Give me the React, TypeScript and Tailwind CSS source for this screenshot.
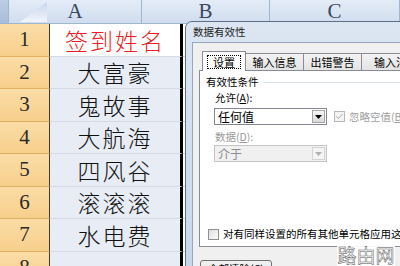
import { Check } from 'lucide-react';

const rows = [
  { n: 1, v: '签到姓名', red: true },
  { n: 2, v: '大富豪' },
  { n: 3, v: '鬼故事' },
  { n: 4, v: '大航海' },
  { n: 5, v: '四风谷' },
  { n: 6, v: '滚滚滚' },
  { n: 7, v: '水电费' },
  { n: 8, v: '' },
];

const cjk = "font-['Noto_Sans_CJK_SC',sans-serif]";
const serif = "font-['Liberation_Serif',serif]";

function Box({ checked, disabled }: { checked?: boolean; disabled?: boolean }) {
  return (
    <div
      className={`flex h-[11px] w-[11px] shrink-0 items-center justify-center border ${
        disabled ? 'border-[#b8b8b8] bg-[#f4f4f4]' : 'border-[#8e8f8f] bg-gradient-to-br from-[#dcdcdc] to-white'
      }`}
    >
      {checked && <Check className="h-[9px] w-[9px] text-[#a8a8a8]" strokeWidth={2.5} />}
    </div>
  );
}

function Combo({ value, disabled }: { value: string; disabled?: boolean }) {
  return (
    <div
      className={`ml-[13px] flex h-[17px] w-[113px] items-center border ${
        disabled ? 'border-[#c4c6c8] bg-[#f0f0f0] text-[#8d8d8d]' : 'border-[#828790] bg-white text-black'
      }`}
    >
      <span className="flex-1 pl-[3px] text-[12px] leading-none">{value}</span>
      <div
        className={`mr-px flex h-[13px] w-[13px] items-center justify-center border ${
          disabled ? 'border-[#d4d4d4] bg-[#f4f4f4]' : 'border-[#a5a5a5] bg-gradient-to-b from-[#f6f6f6] to-[#dadada]'
        }`}
      >
        <svg width="7" height="4" viewBox="0 0 7 4">
          <path d="M0 0H7L3.5 4Z" fill={disabled ? '#b0b0b0' : '#000'} />
        </svg>
      </div>
    </div>
  );
}

function Sheet() {
  return (
    <div className="flex flex-col">
      <div className="flex h-[24px]">
        <div className="relative w-[50px] border-r border-b border-[#9eb6ce] bg-gradient-to-b from-[#bccde5] to-[#a9bedb]">
          <svg className="absolute inset-0" width="49" height="23" viewBox="0 0 49 23">
            <defs>
              <linearGradient id="tri" x1="0" y1="0" x2="0" y2="1">
                <stop offset="0" stopColor="#c7d5ea" />
                <stop offset="1" stopColor="#f1f5fb" />
              </linearGradient>
            </defs>
            <path d="M20 22H47V2Z" fill="url(#tri)" />
          </svg>
        </div>
        {[
          ['A', 'w-[133px]'],
          ['B', 'w-[128px]'],
          ['C', 'w-[130px]'],
        ].map(([l, w]) => (
          <div
            key={l}
            className={`${w} flex shrink-0 items-center justify-center border-r border-b border-[#9eb6ce] bg-gradient-to-b from-[#e4ecf7] to-[#d0ddef] ${serif} text-[21px] text-[#3a4862]`}
          >
            {l}
          </div>
        ))}
      </div>
      {rows.map((r) => (
        <div key={r.n} className="flex h-[32.5px]">
          <div
            className={`flex w-[50px] shrink-0 items-center justify-center border-r border-b border-r-[#3c3c3c] border-b-[#dfb063] bg-gradient-to-b from-[#fbdda6] to-[#f7cf8c] ${serif} text-[21px] text-[#2a2a2a]`}
          >
            {r.n}
          </div>
          <div
            className={`flex w-[133px] shrink-0 items-center justify-center border-r-[3px] border-b border-r-black border-b-[#d3dae6] ${
              r.n === 1 ? 'bg-white text-[#ec1c24]' : 'bg-[#e7ecf5] text-[#111]'
            } ${cjk} text-[23px] font-light tracking-[2px]`}
          >
            {r.v}
          </div>
          <div className="w-[128px] border-r border-b border-[#d3dae6] bg-white" />
        </div>
      ))}
    </div>
  );
}

function Dialog() {
  return (
    <div
      className={`absolute left-[185px] top-[21px] flex h-[262px] w-[240px] flex-col rounded-tl-[7px] border border-[#5c6e88] bg-gradient-to-b from-[#dce6f2] to-[#c6d6eb] ${cjk} text-[10.5px] text-black`}
    >
      <div className="flex h-[22px] items-center pl-[7px] text-[#1e1e1e]">数据有效性</div>
      <div className="ml-[6px] flex flex-1 flex-col border-t border-l border-[#95a6bd] bg-[#f0f0f0] pt-[8px] pl-[6px]">
        <div className="flex h-[19px] items-end pl-[3px] text-[11px]">
          <div className="relative z-10 -mb-px flex h-[20px] w-[44px] items-center justify-center border border-b-0 border-[#898c95] bg-white">
            <span className="border border-dotted border-black px-[5px] leading-[12px]">设置</span>
          </div>
          {['输入信息', '出错警告', '输入法'].map((t) => (
            <div
              key={t}
              className="-ml-px flex h-[17px] w-[59px] shrink-0 items-center justify-center border border-b-0 border-[#898c95] bg-gradient-to-b from-[#f3f3f3] to-[#e3e3e3]"
            >
              {t}
            </div>
          ))}
        </div>
        <div className="flex h-[177px] flex-col border border-[#898c95] bg-white pl-px">
          <div className="mt-[4px] flex h-[14px] items-center pl-[5px]">
            <span>有效性条件</span>
            <div className="ml-[4px] h-px flex-1 bg-[#d5dfe5]" />
          </div>
          <div className="mt-[2px] flex h-[14px] items-center pl-[14px]">
            允许(<span className="underline">A</span>):
          </div>
          <div className="mt-[3px] flex items-center">
            <Combo value="任何值" />
            <div className="ml-[7px] flex items-center gap-[4px] text-[#a0a0a0]">
              <Box checked disabled />
              <span className="whitespace-nowrap">
                忽略空值(<span className="underline">B</span>)
              </span>
            </div>
          </div>
          <div className="mt-[5px] flex h-[14px] items-center pl-[14px] text-[#9a9a9a]">
            数据(<span className="underline">D</span>):
          </div>
          <div className="mt-px flex">
            <Combo value="介于" disabled />
          </div>
          <div className="mt-auto mb-[5px] flex h-[14px] items-center gap-[4px] pl-[7px] whitespace-nowrap">
            <Box />
            <span>对有同样设置的所有其他单元格应用这些更改</span>
          </div>
        </div>
        <div className="mt-[13px] ml-px flex h-[22px] w-[72px] items-start justify-center rounded-[3px] border border-[#707070] bg-gradient-to-b from-[#f2f2f2] to-[#dddddd] pt-[1px] leading-[14px]">
          全部清除(<span className="underline">C</span>)
        </div>
      </div>
    </div>
  );
}

export default function App() {
  return (
    <div className="relative h-[266px] w-[400px] overflow-hidden bg-white">
      <Sheet />
      <Dialog />
      <div
        className={`absolute left-[337px] top-[242px] flex h-[24px] w-[58px] items-center justify-center bg-white/90 ${cjk} text-[19px] leading-none text-transparent [-webkit-text-stroke:0.5px_#555]`}
      >
        路由网
      </div>
    </div>
  );
}
